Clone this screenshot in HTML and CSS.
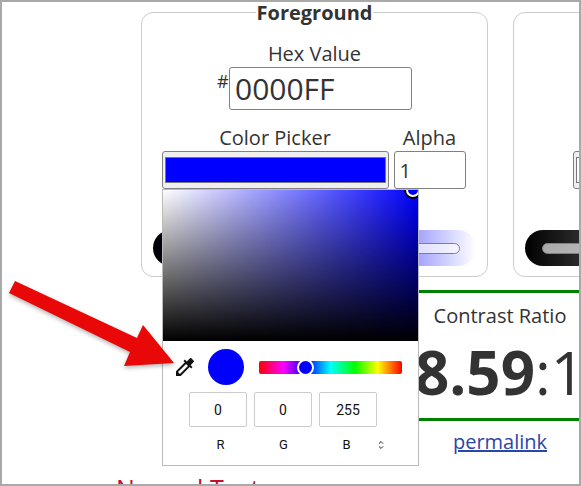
FILE: index.html
```html
<!DOCTYPE html>
<html lang="en">
<head>
<meta charset="utf-8">
<title>Contrast Checker</title>
<link rel="stylesheet" href="styles.css">
</head>
<body>
<div class="frame">
  <div class="pickers">
    <fieldset class="group">
      <legend class="group-title">Foreground</legend>
      <div class="group-body">
        <label class="field-label">Hex Value</label>
        <div class="hex-row">
          <span class="hash">#</span>
          <input class="hex-input" type="text" value="0000FF">
        </div>
        <div class="picker-row">
          <div class="picker-col">
            <label class="field-label">Color Picker</label>
            <div class="swatch"><span class="swatch-fill swatch-blue"></span></div>
          </div>
          <div class="alpha-col">
            <label class="field-label">Alpha</label>
            <input class="alpha-input" type="text" value="1">
          </div>
        </div>
        <div class="slider slider-blue"><span class="slider-track"></span></div>
      </div>
    </fieldset>
    <fieldset class="group">
      <legend class="group-title">Background</legend>
      <div class="group-body">
        <label class="field-label">Hex Value</label>
        <div class="hex-row">
          <span class="hash">#</span>
          <input class="hex-input" type="text" value="FFFFFF">
        </div>
        <div class="picker-row picker-row-bg">
          <div class="picker-col">
            <label class="field-label">Color Picker</label>
            <div class="swatch"><span class="swatch-fill swatch-white"></span></div>
          </div>
        </div>
        <div class="slider slider-white"><span class="slider-track"></span></div>
      </div>
    </fieldset>
  </div>

  <div class="lower">
    <div class="samples">
      <h2 class="sample-title">Normal Text</h2>
    </div>
    <div class="results">
      <div class="ratio-box">
        <div class="ratio-label">Contrast Ratio</div>
        <div class="ratio-value"><strong>8.59</strong>:1</div>
      </div>
      <a class="permalink" href="#">permalink</a>
    </div>
  </div>

  <div class="popover">
    <div class="sat-area"><span class="sat-thumb"></span></div>
    <div class="tool-row">
      <svg class="dropper" viewBox="0 0 24 24" aria-hidden="true"><path d="M20.71 5.63l-2.34-2.34c-.39-.39-1.02-.39-1.41 0l-3.12 3.12-1.93-1.91-1.41 1.41 1.42 1.42L3 16.25V21h4.75l8.92-8.92 1.42 1.42 1.41-1.41-1.92-1.92 3.12-3.12c.4-.4.4-1.03.01-1.42zM6.92 19L5 17.08l8.06-8.06 1.92 1.92L6.92 19z"/></svg>
      <span class="preview"></span>
      <div class="hue"><span class="hue-thumb"></span></div>
    </div>
    <div class="rgb-inputs">
      <input class="rgb-input" type="text" value="0">
      <input class="rgb-input" type="text" value="0">
      <input class="rgb-input" type="text" value="255">
    </div>
    <div class="rgb-labels">
      <span>R</span><span>G</span><span>B</span>
      <svg class="mode-toggle" viewBox="0 0 8 12" aria-hidden="true"><path d="M1.2 4.2 4 1.4l2.8 2.8M1.2 7.8 4 10.6l2.8-2.8"/></svg>
    </div>
  </div>

  <svg class="arrow" viewBox="0 0 200 110" aria-hidden="true"><polygon points="13,1 7,13 128,72 122,86 172,83 141,45 135,58"/></svg>
</div>
</body>
</html>
```
FILE: styles.css
```css
* { box-sizing: border-box; }
html, body { margin: 0; height: 100%; overflow: hidden; background: #fff; }
body { font-family: "Open Sans", sans-serif; color: #333; }

.frame {
  position: relative;
  width: 581px;
  height: 486px;
  border: 2px solid #a9a9a9;
  overflow: hidden;
  background: #fff;
}

.pickers {
  display: flex;
  gap: 25px;
  padding-left: 139px;
}

.group {
  flex: 0 0 347px;
  width: 347px;
  min-width: 0;
  margin: 0;
  padding: 0;
  border: 1px solid #ccc;
  border-radius: 12px;
}

.group-title {
  height: 20px;
  margin: 0 auto;
  padding: 0 1px;
  font-size: 20px;
  line-height: 22px;
  font-weight: 700;
}

.group-body {
  display: flex;
  flex-direction: column;
  align-items: center;
  padding: 19px 0 10px;
}

.field-label {
  display: block;
  font-size: 20px;
  line-height: 26px;
  text-align: center;
}

.hex-row {
  display: flex;
  align-items: flex-start;
  margin-bottom: 15px;
}

.hash { font-size: 18px; line-height: 28px; width: 12px; }

.hex-input {
  width: 183px;
  height: 43px;
  padding: 0 5px;
  border: 1px solid #808080;
  border-radius: 3px;
  font: 30px "Open Sans", sans-serif;
  color: #333;
  background: #fff;
}

.picker-row { display: flex; gap: 5px; margin-left: -2px; }
.picker-row-bg { align-self: flex-start; margin-left: 59px; }

.picker-col { width: 227px; }
.alpha-col { width: 72px; }

.swatch {
  display: block;
  height: 38px;
  padding: 5px 2px;
  border: 1px solid #808080;
  border-radius: 3px;
  background: #efefef;
}

.swatch-fill { display: block; height: 100%; border: 1px solid #777; }
.swatch-blue { background: #00f; }
.swatch-white { background: #fff; }

.alpha-input {
  display: block;
  width: 72px;
  height: 38px;
  padding: 0 5px;
  border: 1px solid #808080;
  border-radius: 3px;
  font: 20px "Open Sans", sans-serif;
  color: #333;
}

.slider {
  width: 323px;
  height: 36px;
  margin-top: 41px;
  padding: 13px 16px 12px 17px;
  border-radius: 18px;
}
.slider-blue { background: linear-gradient(to right, #000, #00f 50%, #fff); }
.slider-white { background: linear-gradient(to right, #000, #fff); }

.slider-track {
  display: block;
  height: 11px;
  border: 1px solid #808080;
  border-radius: 6px;
  background: rgba(255, 255, 255, .65);
}

.lower {
  display: flex;
  margin-top: 13px;
  padding-left: 114px;
}

.samples { flex: 0 0 284px; padding-top: 181px; }

.sample-title {
  margin: 0;
  font-size: 25px;
  line-height: 34px;
  font-weight: 400;
  color: #c8102e;
  white-space: nowrap;
}

.results {
  flex: 0 0 200px;
  display: flex;
  flex-direction: column;
  align-items: center;
}

.ratio-box {
  width: 100%;
  padding: 10px 0 3px;
  border-top: 3px solid #008000;
  border-bottom: 3px solid #008000;
  text-align: center;
}

.ratio-label { font-size: 20px; line-height: 26px; }

.ratio-value {
  font-size: 60px;
  line-height: 86px;
  white-space: nowrap;
}

.permalink {
  margin-top: 8px;
  font-size: 20px;
  line-height: 26px;
  color: #2a46a8;
}

.popover {
  position: absolute;
  left: 160px;
  top: 187px;
  width: 257px;
  height: 277px;
  border: 1px solid #bbb;
  background: #fff;
  overflow: hidden;
  font-family: Roboto, sans-serif;
  color: #111;
}

.sat-area {
  position: relative;
  height: 151px;
  background:
    linear-gradient(to top, #000, rgba(0, 0, 0, 0)),
    linear-gradient(to right, #fff, #00f);
}

.sat-thumb {
  position: absolute;
  left: 243px;
  top: -7px;
  width: 14px;
  height: 14px;
  border: 2px solid #fff;
  border-radius: 50%;
  background: #00f;
  box-shadow: 0 0 0 2px #000;
}

.tool-row {
  display: flex;
  align-items: center;
  height: 36px;
  margin-top: 8px;
  padding-left: 10px;
}

.dropper { width: 24px; height: 24px; margin-right: 11px; fill: #111; }

.preview {
  width: 36px;
  height: 36px;
  margin-right: 15px;
  border-radius: 50%;
  background: #00f;
}

.hue {
  position: relative;
  width: 143px;
  height: 13px;
  border-radius: 2px;
  background: linear-gradient(to right, #f00, #f0f 17%, #00f 33%, #0ff 50%, #0f0 67%, #ff0 83%, #f00);
}

.hue-thumb {
  position: absolute;
  left: 38px;
  top: -2px;
  width: 17px;
  height: 17px;
  border: 2px solid #fff;
  border-radius: 50%;
  background: #00f;
}

.rgb-inputs {
  display: flex;
  gap: 7px;
  margin-top: 7px;
  padding-left: 26px;
}

.rgb-input {
  width: 58px;
  height: 35px;
  padding: 0;
  border: 1px solid #ccc;
  border-radius: 2px;
  font: 14px Roboto, sans-serif;
  color: #111;
  text-align: center;
}

.rgb-labels {
  display: grid;
  grid-template-columns: repeat(3, 63px) 10px;
  align-items: center;
  margin-top: 11px;
  padding-left: 26px;
  font-size: 13px;
  line-height: 14px;
  text-align: center;
}

.mode-toggle {
  width: 6px;
  height: 10px;
  fill: none;
  stroke: #222;
  stroke-width: 1.3;
}

.arrow {
  position: absolute;
  left: 0;
  top: 278px;
  width: 200px;
  height: 110px;
  fill: #e90808;
  filter: drop-shadow(0 2px 2px rgba(0, 0, 0, .3));
}
```
